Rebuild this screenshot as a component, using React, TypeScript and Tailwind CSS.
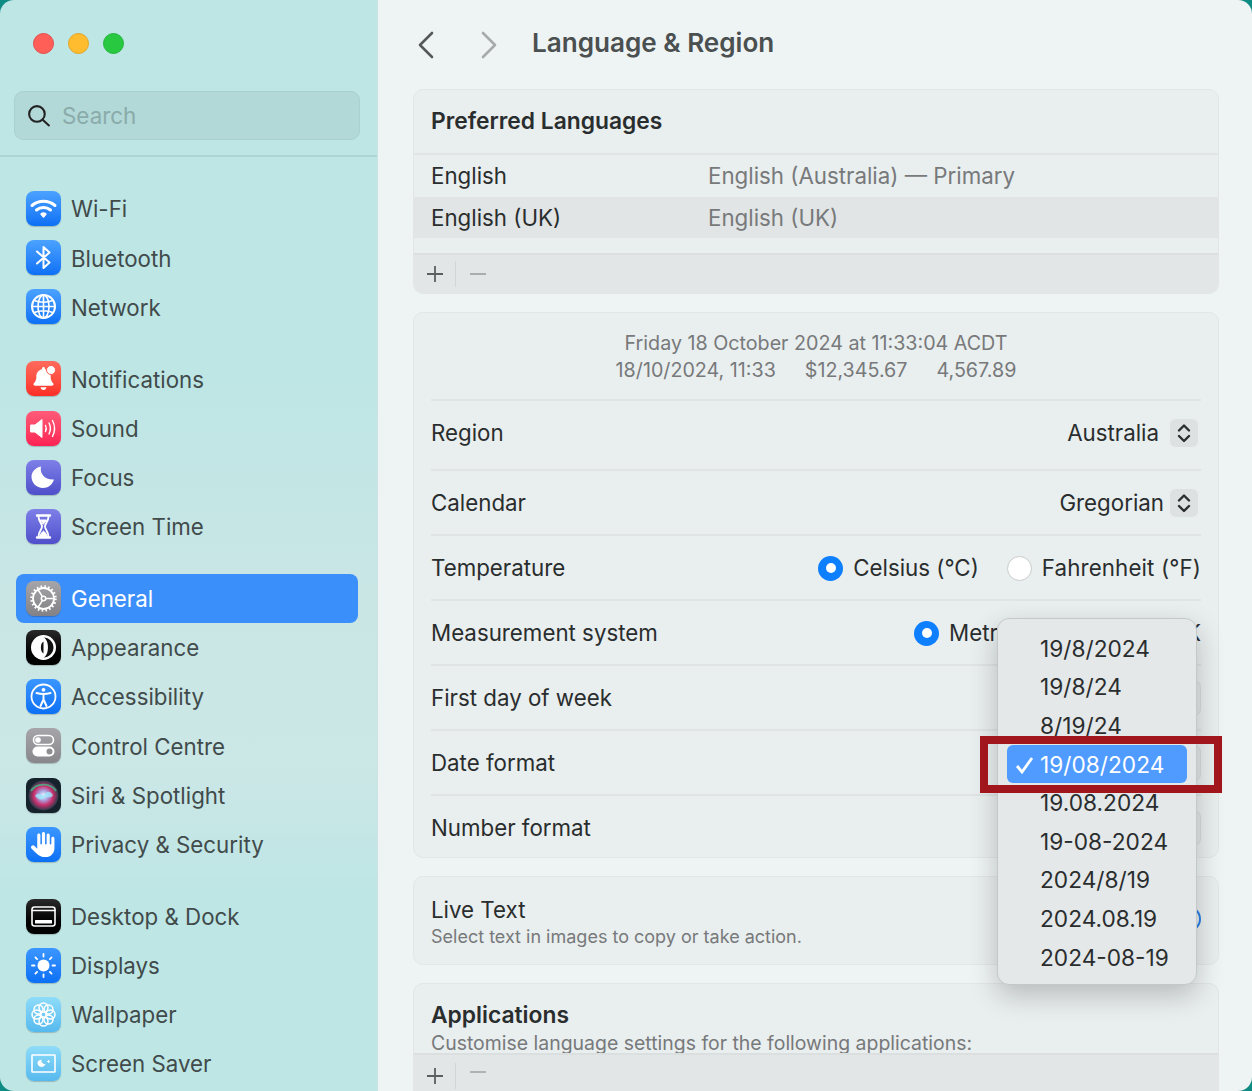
import { ReactNode } from "react";
import { FaBell, FaHand } from "react-icons/fa6";

const W = "#ffffff";

const Glyph = ({ children }: { children: ReactNode }) => (
  <svg viewBox="0 0 35 35" className="h-full w-full" fill="none" stroke={W} strokeLinecap="round" strokeLinejoin="round">
    {children}
  </svg>
);

const icons: Record<string, ReactNode> = {
  wifi: (
    <Glyph>
      <path d="M6 14.500c6.500-5.600 16.500-5.600 23 0" strokeWidth="3" />
      <path d="M10.500 19c4-3.300 10-3.300 14 0" strokeWidth="3" />
      <path d="M15 23c1.500-1.100 3.500-1.100 5 0l-2.500 3z" fill={W} strokeWidth="1.500" />
    </Glyph>
  ),
  bluetooth: (
    <Glyph>
      <path d="M11 11.500 23.500 22.500 17.500 28V7l6 5.500L11 23.500" strokeWidth="2" />
    </Glyph>
  ),
  network: (
    <Glyph>
      <circle cx="17.500" cy="17.500" r="11.500" strokeWidth="2" />
      <ellipse cx="17.500" cy="17.500" rx="5.500" ry="11.500" strokeWidth="1.600" />
      <path d="M6 17.500h23M8 11.500c5.500 2 13.500 2 19 0M8 23.500c5.500-2 13.500-2 19 0M17.500 6v23" strokeWidth="1.600" />
    </Glyph>
  ),
  notifications: (
    <div className="relative flex h-full w-full items-center justify-center text-white">
      <FaBell className="h-[23px] w-[23px]" />
      <div className="absolute right-[5px] top-[4px] h-[10px] w-[10px] rounded-full border border-[#ff5a4c] bg-white" />
    </div>
  ),
  sound: (
    <Glyph>
      <path d="M5 14h4l7-5.500v18L9 21H5z" fill={W} strokeWidth="1" />
      <path d="M19.500 14.500c1 2 1 4 0 6M23 12c1.800 3.500 1.800 7.500 0 11M26.500 9.500c2.600 5 2.600 11 0 16" strokeWidth="1.400" />
    </Glyph>
  ),
  focus: (
    <svg viewBox="0 0 35 35" className="h-full w-full">
      <path d="M15 6.500c-1.500 7 3.500 13.500 13 13-1.500 5-6 8.500-11 8.500-6.500 0-11.500-5-11.500-11.200C5.500 11.800 9.500 7.500 15 6.500z" fill={W} />
    </svg>
  ),
  screentime: (
    <Glyph>
      <path d="M11 6.500h13M11 28.500h13" strokeWidth="2.400" />
      <path d="M12.500 7.500c0 5 3.500 7 3.500 10s-3.500 5-3.500 10M22.500 7.500c0 5-3.500 7-3.500 10s3.500 5 3.500 10" strokeWidth="1.800" />
      <path d="M13.500 27.500c1-3 3-4.500 4-5.500 1 1 3 2.500 4 5.500z" fill={W} strokeWidth="1" />
      <path d="M14.500 11h6l-3 4z" fill={W} strokeWidth="1" />
    </Glyph>
  ),
  general: (
    <Glyph>
      <circle cx="17.500" cy="17.500" r="10.500" strokeWidth="1.800" />
      <circle cx="17.500" cy="17.500" r="12" strokeWidth="2.500" strokeDasharray="1.600 2.200" strokeLinecap="butt" />
      <circle cx="17.500" cy="17.500" r="2.200" strokeWidth="1.500" />
      <path d="M19.700 17.500h8M16.400 15.600 12 8.500M16.400 19.400 12 26.500" strokeWidth="1.500" />
    </Glyph>
  ),
  appearance: (
    <svg viewBox="0 0 35 35" className="h-full w-full">
      <circle cx="17.500" cy="17.500" r="12.500" fill={W} />
      <path d="M17.500 7.500c6 2 6 18 0 20 5.500 0 10-4.500 10-10s-4.500-10-10-10z" fill="#111" />
      <path d="M17.500 11.500c-3.500 1.500-3.500 10.500 0 12z" fill="#111" />
    </svg>
  ),
  accessibility: (
    <Glyph>
      <circle cx="17.500" cy="17.500" r="12" strokeWidth="1.800" />
      <circle cx="17.500" cy="10.800" r="1.900" fill={W} stroke="none" />
      <path d="M10.500 14c4.500 1.300 9.500 1.300 14 0M17.500 15v5.500M17.500 20.500l-3 6.500M17.500 20.500l3 6.500" strokeWidth="2" />
    </Glyph>
  ),
  control: (
    <svg viewBox="0 0 35 35" className="h-full w-full">
      <rect x="7.500" y="7.500" width="20" height="9" rx="4.500" fill="none" stroke={W} strokeWidth="1.600" />
      <circle cx="12" cy="12" r="2.800" fill={W} />
      <rect x="6.500" y="18.500" width="22" height="10" rx="5" fill={W} />
      <circle cx="23.500" cy="23.500" r="3" fill="#8e8e92" />
    </svg>
  ),
  siri: (
    <svg viewBox="0 0 35 35" className="h-full w-full">
      <defs>
        <radialGradient id="siriGlow" cx="50%" cy="50%" r="52%">
          <stop offset="0%" stopColor="#f2f8ff" />
          <stop offset="30%" stopColor="#a9a6e2" />
          <stop offset="62%" stopColor="#c92f6c" />
          <stop offset="100%" stopColor="#173d48" />
        </radialGradient>
      </defs>
      <circle cx="17.500" cy="17.500" r="15" fill="url(#siriGlow)" />
      <path d="M9 18c4-6 7 2 10-2s6-2 8 1c-3 5-6 0-9 3s-6 1-9-2z" fill="#9fe6fb" opacity="0.800" />
      <path d="M5 13c5-8 19-9 25 0" stroke="#3fbf8a" strokeWidth="1.800" fill="none" opacity="0.800" />
    </svg>
  ),
  privacy: (
    <div className="flex h-full w-full items-center justify-center text-white">
      <FaHand className="h-[25px] w-[25px]" />
    </div>
  ),
  desktop: (
    <Glyph>
      <rect x="6" y="8" width="23" height="19" rx="2.500" strokeWidth="1.600" />
      <path d="M6 11.500h23" strokeWidth="1.400" />
      <rect x="9" y="21" width="17" height="3.500" rx="0.500" fill={W} stroke="none" />
    </Glyph>
  ),
  displays: (
    <Glyph>
      <circle cx="17.500" cy="17.500" r="6" fill={W} stroke="none" />
      <path d="M17.500 6v2.500M17.500 26.500V29M6 17.500h2.500M26.500 17.500H29M9.400 9.400l1.700 1.700M23.900 23.900l1.700 1.700M25.600 9.400l-1.700 1.700M11.100 23.900l-1.700 1.700" strokeWidth="1.800" />
    </Glyph>
  ),
  wallpaper: (
    <Glyph>
      <circle cx="17.500" cy="10.500" r="4.500" strokeWidth="1.500" />
      <circle cx="17.500" cy="24.500" r="4.500" strokeWidth="1.500" />
      <circle cx="10.500" cy="17.500" r="4.500" strokeWidth="1.500" />
      <circle cx="24.500" cy="17.500" r="4.500" strokeWidth="1.500" />
      <circle cx="12.500" cy="12.500" r="4.500" strokeWidth="1.500" />
      <circle cx="22.500" cy="12.500" r="4.500" strokeWidth="1.500" />
      <circle cx="12.500" cy="22.500" r="4.500" strokeWidth="1.500" />
      <circle cx="22.500" cy="22.500" r="4.500" strokeWidth="1.500" />
    </Glyph>
  ),
  saver: (
    <Glyph>
      <rect x="6" y="9" width="23" height="17" rx="0.500" strokeWidth="1.600" />
      <path d="M15.500 13.500c-.5 2.500 1 4.500 4 4.500-.8 2-2.300 3-4 3-2.300 0-4-1.700-4-3.900 0-1.900 1.700-3.300 4-3.600z" fill={W} stroke="none" />
      <path d="M22.500 14.500v2M21.500 15.500h2" strokeWidth="1" />
    </Glyph>
  ),
};

const groups = [
  [
    { key: "wifi", label: "Wi-Fi", bg: "bg-linear-to-b from-[#4ba2ff] to-[#0a70f5]" },
    { key: "bluetooth", label: "Bluetooth", bg: "bg-linear-to-b from-[#4ba2ff] to-[#0a70f5]" },
    { key: "network", label: "Network", bg: "bg-linear-to-b from-[#4ba2ff] to-[#0a70f5]" },
  ],
  [
    { key: "notifications", label: "Notifications", bg: "bg-linear-to-b from-[#ff6a5c] to-[#fb2c25]" },
    { key: "sound", label: "Sound", bg: "bg-linear-to-b from-[#ff5a78] to-[#fc1f54]" },
    { key: "focus", label: "Focus", bg: "bg-linear-to-b from-[#7f7fe8] to-[#4f4fca]" },
    { key: "screentime", label: "Screen Time", bg: "bg-linear-to-b from-[#7f7fe8] to-[#4f4fca]" },
  ],
  [
    { key: "general", label: "General", bg: "bg-linear-to-b from-[#a6a6aa] to-[#828286]", active: true },
    { key: "appearance", label: "Appearance", bg: "bg-linear-to-b from-[#2a2a2a] to-black" },
    { key: "accessibility", label: "Accessibility", bg: "bg-linear-to-b from-[#3a96ff] to-[#0a70f5]" },
    { key: "control", label: "Control Centre", bg: "bg-linear-to-b from-[#a6a6aa] to-[#88888c]" },
    { key: "siri", label: "Siri & Spotlight", bg: "bg-[#15212b]" },
    { key: "privacy", label: "Privacy & Security", bg: "bg-linear-to-b from-[#3a96ff] to-[#0a70f5]" },
  ],
  [
    { key: "desktop", label: "Desktop & Dock", bg: "bg-linear-to-b from-[#2a2a2a] to-black" },
    { key: "displays", label: "Displays", bg: "bg-linear-to-b from-[#3a96ff] to-[#0a70f5]" },
    { key: "wallpaper", label: "Wallpaper", bg: "bg-linear-to-b from-[#8edcf9] to-[#55b9ee]" },
    { key: "saver", label: "Screen Saver", bg: "bg-linear-to-b from-[#8edcf9] to-[#55b9ee]" },
  ],
];

const Sidebar = () => (
  <aside className="flex h-full w-[378px] shrink-0 flex-col border-r border-[#cbe4e3] bg-[linear-gradient(180deg,#bee6e5_0%,#bee6e5_35%,#c9e6e5_55%,#cbe7e6_70%,#bee6e5_82%,#bee6e5_100%)]">
    <div className="flex h-[157px] shrink-0 flex-col border-b-2 border-[#aed5d4] pl-[14px] pr-[17px]">
      <div className="flex h-[87px] shrink-0 items-center gap-[14px] pl-[19px]">
        <div className="h-[21px] w-[21px] rounded-full border border-[#e5484a] bg-[#ff5f57]" />
        <div className="h-[21px] w-[21px] rounded-full border border-[#e2a428] bg-[#febc2e]" />
        <div className="h-[21px] w-[21px] rounded-full border border-[#22b53a] bg-[#28c840]" />
      </div>
      <div className="mt-[4px] flex h-[49px] shrink-0 items-center gap-[11px] rounded-[9px] border border-[#aad0cf] bg-[#b2d8d7] pl-[11px]">
        <svg viewBox="0 0 24 24" className="h-[25px] w-[25px]" fill="none" stroke="#222" strokeWidth="2" strokeLinecap="round">
          <circle cx="10.500" cy="10.500" r="7.500" />
          <path d="m16 16 6 5.500" />
        </svg>
        <span className="pt-[1px] text-[22.4px] text-[#8aabaa]">Search</span>
      </div>
    </div>
    <nav className="flex flex-col gap-[22.7px] pl-[16px] pr-[19px] pt-[27px]">
      {groups.map((group, i) => (
        <div key={i} className="flex flex-col">
          {group.map((item) => (
            <div
              key={item.key}
              className={`flex h-[49.2px] items-center gap-[10px] rounded-[8px] pl-[10px] text-[22.3px] ${
                item.active ? "bg-[#3b8ffb] text-white" : "text-[#414b4b]"
              }`}
            >
              <div className={`h-[35px] w-[35px] shrink-0 overflow-hidden rounded-[8px] shadow-[0_1px_1px_rgba(0,0,0,0.2)] ${item.bg}`}>
                {icons[item.key]}
              </div>
              <span className="pt-[1px]">{item.label}</span>
            </div>
          ))}
        </div>
      ))}
    </nav>
  </aside>
);

const Stepper = () => (
  <div className="flex h-[28px] w-[28px] items-center justify-center rounded-[6px] bg-[#dde1e1]">
    <svg viewBox="0 0 28 28" className="h-full w-full" fill="none" stroke="#2b2e2f" strokeWidth="2.400" strokeLinecap="round" strokeLinejoin="round">
      <path d="m9 11.500 5-5 5 5M9 17l5 5 5-5" />
    </svg>
  </div>
);

// pop-up button whose label is covered by the open menu, only its right end shows
const CoveredSelect = () => <div className="h-[36px] w-[130px] rounded-[7px] border border-[#d8dcdc] bg-[#e4e7e7]" />;

const Radio = ({ on }: { on?: boolean }) =>
  on ? (
    <div className="flex h-[25px] w-[25px] items-center justify-center rounded-full bg-[#0d7fff]">
      <div className="h-[10px] w-[10px] rounded-full bg-white" />
    </div>
  ) : (
    <div className="h-[25px] w-[25px] rounded-full border border-[#c9cccc] bg-white" />
  );

const Footer = ({ className = "" }: { className?: string }) => (
  <div className={`flex items-center border-t-2 border-[#dcdfdf] bg-[#e2e6e6] ${className}`}>
    <div className="flex h-[26px] w-[42px] items-center justify-center border-r border-[#d2d6d6]">
      <svg viewBox="0 0 18 18" className="h-[18px] w-[18px]" stroke="#5a5f60" strokeWidth="1.800">
        <path d="M9 1v16M1 9h16" />
      </svg>
    </div>
    <svg viewBox="0 0 18 18" className="ml-[13px] h-[18px] w-[18px]" stroke="#a9adad" strokeWidth="1.800">
      <path d="M1 9h16" />
    </svg>
  </div>
);

const Row = ({ label, className, last, children }: { label: string; className: string; last?: boolean; children?: ReactNode }) => (
  <div className={`mx-[17px] flex items-center justify-between ${className} ${last ? "" : "border-b-2 border-[#e0e4e4]"}`}>
    <span>{label}</span>
    <div className="flex items-center">{children}</div>
  </div>
);

const Card = ({ className = "", children }: { className?: string; children: ReactNode }) => (
  <section className={`rounded-[10px] border border-[#e2e6e6] bg-[#e9eeee] ${className}`}>{children}</section>
);

const Main = () => (
  <main className="flex h-full min-w-0 flex-1 flex-col overflow-hidden bg-[#eef3f3] pl-[35px] pr-[33px] text-[22.3px] text-[#2a2d2e]">
    <header className="flex h-[89px] shrink-0 items-center">
      <svg viewBox="0 0 20 28" className="ml-[3px] h-[28px] w-[20px]" fill="none" stroke="#55595a" strokeWidth="2.600" strokeLinecap="round" strokeLinejoin="round">
        <path d="M16 2 4 14l12 12" />
      </svg>
      <svg viewBox="0 0 20 28" className="ml-[43px] h-[28px] w-[20px]" fill="none" stroke="#a6aaaa" strokeWidth="2.600" strokeLinecap="round" strokeLinejoin="round">
        <path d="m4 2 12 12L4 26" />
      </svg>
      <h1 className="mb-[3px] ml-[33px] text-[26.1px] font-semibold text-[#4a4f50]">Language &amp; Region</h1>
    </header>

    <div className="flex flex-col gap-[18px]">
      <Card className="h-[205px] overflow-hidden">
        <div className="flex h-[65px] items-center border-b-2 border-[#e0e4e4] px-[17px] text-[22.8px] font-semibold">Preferred Languages</div>
        <div className="flex h-[42px] items-center px-[17px]">
          <span className="w-[277px]">English</span>
          <span className="text-[#77797b]">English (Australia) — Primary</span>
        </div>
        <div className="flex h-[41px] items-center bg-[#e1e5e5] px-[17px] pt-[1px]">
          <span className="w-[277px]">English (UK)</span>
          <span className="text-[#77797b]">English (UK)</span>
        </div>
        <Footer className="mt-[15px] h-[40px]" />
      </Card>

      <Card className="h-[546px]">
        <div className="mx-[17px] flex h-[88px] flex-col items-center border-b-2 border-[#e0e4e4] pt-[17px] text-[19.7px] leading-[27px] text-[#77797b]">
          <div>Friday 18 October 2024 at 11:33:04 ACDT</div>
          <div className="flex gap-[29px]">
            <span>18/10/2024, 11:33</span>
            <span>$12,345.67</span>
            <span>4,567.89</span>
          </div>
        </div>
        <Row label="Region" className="h-[70px] pb-[4px]">
          <span className="mr-[11px]">Australia</span>
          <div className="mr-[3px]"><Stepper /></div>
        </Row>
        <Row label="Calendar" className="h-[65px] pt-[1px]">
          <span className="mr-[6px]">Gregorian</span>
          <div className="mr-[3px]"><Stepper /></div>
        </Row>
        <Row label="Temperature" className="h-[65px] pt-[1px]">
          <Radio on />
          <span className="ml-[10px]">Celsius (°C)</span>
          <div className="ml-[28px]"><Radio /></div>
          <span className="ml-[10px] tracking-[0.13px]">Fahrenheit (°F)</span>
        </Row>
        <Row label="Measurement system" className="h-[65px] pt-[1px]">
          <Radio on />
          <span className="ml-[10px]">Metric</span>
          <div className="ml-[29px]"><Radio /></div>
          <div className="ml-[10px] w-[25px]" />
          <div className="ml-[29px]"><Radio /></div>
          <span className="ml-[10px]">UK</span>
        </Row>
        <Row label="First day of week" className="h-[65px] pt-[1px]">
          <CoveredSelect />
        </Row>
        <Row label="Date format" className="h-[65px] pt-[1px]">
          <CoveredSelect />
        </Row>
        <Row label="Number format" className="h-[62px] pt-[1px]" last>
          <CoveredSelect />
        </Row>
      </Card>

      <Card className="flex h-[89px] items-center justify-between px-[17px] pt-[3px]">
        <div>
          <div className="leading-[30px]">Live Text</div>
          <div className="text-[18px] leading-[24px] text-[#77797b]">Select text in images to copy or take action.</div>
        </div>
        <div className="mb-[6px] h-[26px] w-[26px] rounded-full border-2 border-[#2b7fe8]" />
      </Card>

      <Card className="flex h-[140px] shrink-0 flex-col overflow-hidden">
        <div className="h-[69px] shrink-0 px-[17px] pt-[16px]">
          <div className="text-[22.8px] font-semibold leading-[30px]">Applications</div>
          <div className="mt-[3px] text-[19.45px] leading-[20px] text-[#77797b]">Customise language settings for the following applications:</div>
        </div>
        <Footer className="h-[71px] items-start pt-[8px]" />
      </Card>
    </div>
  </main>
);

const dates = ["19/8/2024", "19/8/24", "8/19/24", "19/08/2024", "19.08.2024", "19-08-2024", "2024/8/19", "2024.08.19", "2024-08-19"];

const DateMenu = () => (
  <div className="absolute left-[997px] top-[618px] h-[367px] w-[200px] rounded-[12px] border border-[#c4c8c8] bg-[#e4e8e8] px-[9px] pt-[10px] text-[22.7px] text-[#2a2d2e] shadow-[0_10px_28px_rgba(0,0,0,0.22)]">
    {dates.map((d) => {
      const selected = d === "19/08/2024";
      return (
        <div
          key={d}
          className={`flex h-[38.6px] items-center rounded-[6px] pl-[33px] pt-[1px] ${selected ? "relative bg-[#4f9bff] text-white" : ""}`}
        >
          {selected && (
            <svg viewBox="0 0 20 20" className="absolute left-[8px] top-[10px] h-[20px] w-[20px]" fill="none" stroke={W} strokeWidth="2.800">
              <path d="m2 11 5 6 10-14" />
            </svg>
          )}
          {d}
        </div>
      );
    })}
  </div>
);

export default function App() {
  return (
    <div className="relative h-[1091px] w-[1252px] overflow-hidden bg-[#0e8b83] font-['Inter',sans-serif]">
      <div className="flex h-full w-full overflow-hidden rounded-[14px]">
        <Sidebar />
        <Main />
      </div>
      <DateMenu />
      {/* red highlight drawn on top of the screenshot */}
      <div className="absolute left-[980px] top-[736px] h-[57px] w-[242px] border-[8px] border-[#a0161c]" />
    </div>
  );
}
